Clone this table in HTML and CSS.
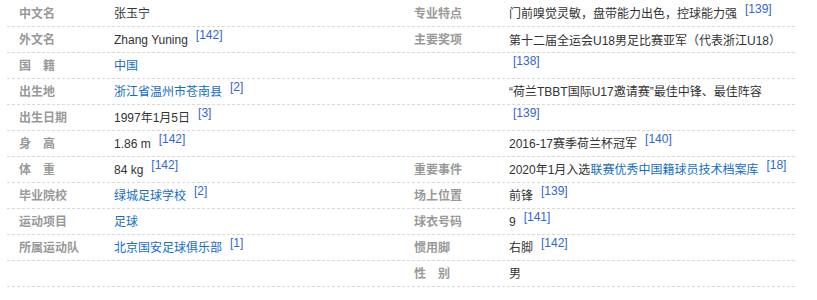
FILE: index.html
```html
<!DOCTYPE html>
<html lang="zh-CN">
<head>
<meta charset="utf-8">
<title>张玉宁</title>
<link rel="stylesheet" href="styles.css">
</head>
<body>
<div class="basic-info">
  <dl class="block">
    <div class="row"><dt class="name">中文名</dt><dd class="value">张玉宁</dd></div>
    <div class="row"><dt class="name">外文名</dt><dd class="value">Zhang Yuning<sup class="ref">[142]</sup></dd></div>
    <div class="row"><dt class="name">国　籍</dt><dd class="value"><a href="#">中国</a></dd></div>
    <div class="row"><dt class="name">出生地</dt><dd class="value"><a href="#">浙江省温州市苍南县</a><sup class="ref">[2]</sup></dd></div>
    <div class="row"><dt class="name">出生日期</dt><dd class="value">1997年1月5日<sup class="ref">[3]</sup></dd></div>
    <div class="row"><dt class="name">身　高</dt><dd class="value">1.86 m<sup class="ref">[142]</sup></dd></div>
    <div class="row"><dt class="name">体　重</dt><dd class="value">84 kg<sup class="ref">[142]</sup></dd></div>
    <div class="row"><dt class="name">毕业院校</dt><dd class="value"><a href="#">绿城足球学校</a><sup class="ref">[2]</sup></dd></div>
    <div class="row"><dt class="name">运动项目</dt><dd class="value"><a href="#">足球</a></dd></div>
    <div class="row"><dt class="name">所属运动队</dt><dd class="value"><a href="#">北京国安足球俱乐部</a><sup class="ref">[1]</sup></dd></div>
    <div class="row"><dt class="name"></dt><dd class="value"></dd></div>
  </dl>
  <dl class="block">
    <div class="row"><dt class="name">专业特点</dt><dd class="value">门前嗅觉灵敏，盘带能力出色，控球能力强<sup class="ref">[139]</sup></dd></div>
    <div class="row"><dt class="name">主要奖项</dt><dd class="value">第十二届全运会U18男足比赛亚军<span class="cjk">（</span>代表浙江U18<span class="cjk">）</span></dd></div>
    <div class="row"><dt class="name"></dt><dd class="value"><sup class="ref solo">[138]</sup></dd></div>
    <div class="row"><dt class="name"></dt><dd class="value">“荷兰TBBT国际U17邀请赛”最佳中锋、最佳阵容</dd></div>
    <div class="row"><dt class="name"></dt><dd class="value"><sup class="ref solo">[139]</sup></dd></div>
    <div class="row"><dt class="name"></dt><dd class="value">2016-17赛季荷兰杯冠军<sup class="ref">[140]</sup></dd></div>
    <div class="row"><dt class="name">重要事件</dt><dd class="value">2020年1月入选<a href="#">联赛优秀中国籍球员技术档案库</a><sup class="ref">[18]</sup></dd></div>
    <div class="row"><dt class="name">场上位置</dt><dd class="value">前锋<sup class="ref">[139]</sup></dd></div>
    <div class="row"><dt class="name">球衣号码</dt><dd class="value">9<sup class="ref">[141]</sup></dd></div>
    <div class="row"><dt class="name">惯用脚</dt><dd class="value">右脚<sup class="ref">[142]</sup></dd></div>
    <div class="row"><dt class="name">性　别</dt><dd class="value">男</dd></div>
  </dl>
</div>
</body>
</html>
```

FILE: styles.css
```css
html, body {
  margin: 0;
  padding: 0;
  background: #fff;
}

body {
  font-family: Arial, "Liberation Sans", "Noto Sans CJK SC", sans-serif;
  font-size: 12px;
  color: #333;
}

.basic-info {
  display: grid;
  grid-template-columns: 395px 395px;
  padding: 1px 0 0 7px;
}

.block {
  margin: 0;
  padding: 0;
}

.row {
  display: flex;
  height: 26px;
  line-height: 26px;
  background-image: repeating-linear-gradient(to right, #dadada 0 3px, transparent 3px 5px);
  background-size: 100% 1px;
  background-position: left bottom;
  background-repeat: no-repeat;
}

.name {
  width: 90px;
  flex: none;
  padding: 0 5px 0 12px;
  margin: 0;
  font-weight: bold;
  color: #999;
  white-space: nowrap;
}

.value {
  margin: 0;
  flex: 1;
  white-space: nowrap;
  color: #333;
}

.value a {
  color: #136ec2;
  text-decoration: none;
}

.cjk {
  display: inline-block;
  width: 12px;
  text-align: center;
  font-family: "Noto Sans CJK SC", sans-serif;
}

.ref {
  font-size: 12px;
  line-height: 0;
  vertical-align: 5px;
  color: #3366cc;
  margin-left: 8px;
  font-family: Arial, "Liberation Sans", sans-serif;
}

.ref.solo {
  margin-left: 4px;
}
```
